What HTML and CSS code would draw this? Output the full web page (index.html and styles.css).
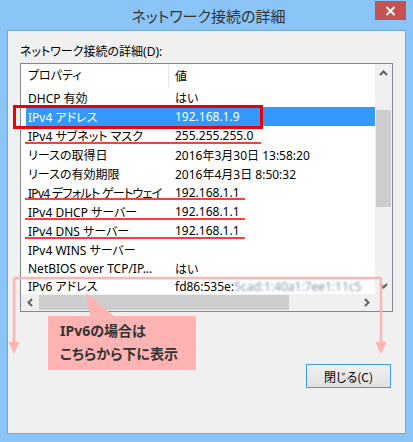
FILE: index.html
```html
<!DOCTYPE html>
<html lang="ja">

<head>
    <meta charset="UTF-8">
    <meta name="viewport" content="width=device-width, initial-scale=1.0">
    <title>ネットワーク接続の詳細</title>
    <link rel="stylesheet" href="styles.css">
</head>

<body>
    <div class="window">
        <div class="titlebar">
            <span></span>
            <span class="title">ネットワーク接続の詳細</span>
            <button class="close" type="button" aria-label="閉じる">
                <svg width="11" height="10" viewBox="0 0 11 10">
                    <path d="M1.5 1 L9.5 9 M9.5 1 L1.5 9" stroke="#fff" stroke-width="2" fill="none" />
                </svg>
            </button>
        </div>

        <div class="panel">
            <div class="label">ネットワーク接続の詳細(D):</div>

            <div class="listview">
                <div class="list-area">
                    <div class="list-header">
                        <div class="col1">プロパティ</div>
                        <div class="col2">値</div>
                    </div>
                    <div class="rows">
                        <div class="row"><div class="col1">DHCP 有効</div><div class="col2">はい</div></div>
                        <div class="row selected"><div class="col1">IPv4 アドレス</div><div class="col2">192.168.1.9</div></div>
                        <div class="row"><div class="col1">IPv4 サブネット マスク</div><div class="col2">255.255.255.0</div></div>
                        <div class="row"><div class="col1">リースの取得日</div><div class="col2">2016年3月30日 13:58:20</div></div>
                        <div class="row"><div class="col1">リースの有効期限</div><div class="col2">2016年4月3日 8:50:32</div></div>
                        <div class="row"><div class="col1 tight">IPv4 デフォルト ゲートウェイ</div><div class="col2">192.168.1.1</div></div>
                        <div class="row"><div class="col1">IPv4 DHCP サーバー</div><div class="col2">192.168.1.1</div></div>
                        <div class="row"><div class="col1">IPv4 DNS サーバー</div><div class="col2">192.168.1.1</div></div>
                        <div class="row"><div class="col1">IPv4 WINS サーバー</div><div class="col2"></div></div>
                        <div class="row"><div class="col1">NetBIOS over TCP/IP...</div><div class="col2">はい</div></div>
                        <div class="row last"><div class="col1">IPv6 アドレス</div><div class="col2">fd86:535e:<span class="masked">5cad:1:40a1:7ee1:11c5</span></div></div>
                    </div>
                </div>

                <div class="vscroll">
                    <div class="arrow">
                        <svg width="9" height="6" viewBox="0 0 9 6"><path d="M1 5 L4.5 1.5 L8 5" stroke="#606060" stroke-width="2" fill="none" /></svg>
                    </div>
                    <div class="vtrack"><div class="vthumb"></div></div>
                    <div class="arrow">
                        <svg width="9" height="6" viewBox="0 0 9 6"><path d="M1 1 L4.5 4.5 L8 1" stroke="#606060" stroke-width="2" fill="none" /></svg>
                    </div>
                </div>

                <div class="hscroll">
                    <div class="arrow">
                        <svg width="6" height="9" viewBox="0 0 6 9"><path d="M5 1 L1.5 4.5 L5 8" stroke="#606060" stroke-width="2" fill="none" /></svg>
                    </div>
                    <div class="htrack"><div class="hthumb"></div></div>
                    <div class="arrow">
                        <svg width="6" height="9" viewBox="0 0 6 9"><path d="M1 1 L4.5 4.5 L1 8" stroke="#606060" stroke-width="2" fill="none" /></svg>
                    </div>
                </div>
                <div class="corner"></div>
            </div>

            <div class="buttons">
                <button class="btn" type="button">閉じる(C)</button>
            </div>
        </div>

        <!-- annotations drawn on top of the screenshot -->
        <div class="mark-box"></div>
        <div class="mark-line line-mask"></div>
        <div class="mark-line line-gw"></div>
        <div class="mark-line line-dhcp"></div>
        <div class="mark-line line-dns"></div>

        <svg class="bracket" width="413" height="442" viewBox="0 0 413 442">
            <path d="M14 278 H381 M14 278 V344 M381 278 V344" stroke="#ffb3b3" stroke-width="2.5" fill="none" />
            <path d="M8.5 342 H19.5 L14 354 Z M375.5 342 H386.5 L381 354 Z" fill="#ffb3b3" />
            <path d="M86 293 L90 316 L114 316 Z" fill="#ffb3b3" />
        </svg>
        <div class="callout">IPv6の場合は<br>こちらから下に表示</div>
    </div>
</body>

</html>
```

FILE: styles.css
```css
body {
    margin: 0;
    font-family: "Noto Sans", "Noto Sans CJK JP", sans-serif;
    font-size: 12px;
    font-feature-settings: "palt";
    color: #000;
}

.window {
    position: relative;
    width: 413px;
    height: 442px;
    background-color: #8bc4f7;
    display: flex;
    flex-direction: column;
    overflow: hidden;
}

.titlebar {
    height: 30px;
    display: grid;
    grid-template-columns: 1fr auto 1fr;
    align-items: start;
}

.title {
    font-family: "Noto Sans CJK JP", sans-serif;
    font-size: 15px;
    color: #333;
    line-height: 31px;
    padding-left: 4px;
}

.close {
    justify-self: end;
    width: 31px;
    height: 19px;
    margin: 1px 7px 0 0;
    padding: 0;
    border: none;
    background-color: #c75050;
    display: flex;
    align-items: center;
    justify-content: center;
}

.panel {
    flex: 1;
    margin: 0 7px 8px 7px;
    border: 1px solid #6fa6d8;
    background-color: #f0f0f0;
    padding: 13px 13px 0 12px;
}

.label {
    line-height: 16px;
    height: 19px;
}

.listview {
    width: 371px;
    height: 247px;
    border: 1px solid #828790;
    background-color: #fff;
    display: grid;
    grid-template-columns: 354px 17px;
    grid-template-rows: 230px 17px;
    overflow: hidden;
}

.list-area {
    overflow: hidden;
}

.list-header {
    height: 24px;
    display: flex;
    align-items: center;
}

.list-header .col1 {
    width: 140px;
    padding-left: 7px;
    height: 24px;
    line-height: 24px;
    border-right: 1px solid #e5e5e5;
}

.list-header .col2 {
    padding-left: 6px;
}

.rows {
    padding-left: 5px;
}

.row {
    height: 19px;
    display: flex;
    align-items: center;
    white-space: nowrap;
}

.row.last {
    align-items: flex-start;
    line-height: 15px;
    padding-top: 1px;
    box-sizing: border-box;
}

.row .col1 {
    width: 140px;
    padding-left: 2px;
    flex-shrink: 0;
}

/* long label, squeeze it so it stays in its column */
.row .col1.tight {
    letter-spacing: -0.7px;
}

.row .col2 {
    padding-left: 7px;
}

.row.selected {
    background-color: #3399ff;
    color: #fff;
}

.masked {
    color: #8d98a8;
    filter: blur(0.8px);
}

.vscroll {
    background-color: #f0f0f0;
    display: flex;
    flex-direction: column;
}

.arrow {
    width: 17px;
    height: 17px;
    flex-shrink: 0;
    display: flex;
    align-items: center;
    justify-content: center;
}

.vtrack {
    flex: 1;
    padding-top: 29px;
}

.vthumb {
    width: 15px;
    height: 97px;
    margin-left: 1px;
    background-color: #cdcdcd;
}

.hscroll {
    background-color: #f0f0f0;
    display: flex;
}

.htrack {
    flex: 1;
    display: flex;
    align-items: center;
}

.hthumb {
    width: 250px;
    height: 15px;
    margin-left: 1px;
    background-color: #cdcdcd;
}

.corner {
    background-color: #f0f0f0;
}

.buttons {
    display: flex;
    justify-content: flex-end;
    margin-top: 52px;
    padding-right: 1px;
}

.btn {
    width: 85px;
    height: 24px;
    border: 1px solid #3c9af5;
    background: linear-gradient(#f0f0f0, #e1e1e1);
    font-family: "Noto Sans CJK JP", sans-serif;
    font-size: 12px;
    font-feature-settings: "palt";
    color: #000;
    padding: 0;
}

/* annotations */
.mark-box {
    position: absolute;
    left: 13px;
    top: 105px;
    width: 244px;
    height: 18px;
    border: 3px solid #e8000b;
}

.mark-line {
    position: absolute;
    left: 25px;
    height: 2px;
    background-color: #ff3b3b;
}

.line-mask {
    top: 142px;
    width: 236px;
}

.line-gw {
    top: 198px;
    width: 220px;
}

.line-dhcp {
    top: 218px;
    width: 220px;
}

.line-dns {
    top: 237px;
    width: 220px;
}

.bracket {
    position: absolute;
    left: 0;
    top: 0;
}

.callout {
    position: absolute;
    left: 48px;
    top: 316px;
    width: 136px;
    height: 51px;
    padding: 3px 0 0 12px;
    background-color: #ffb3b3;
    font-size: 14px;
    font-weight: 700;
    color: #333;
    line-height: 23px;
}
```
